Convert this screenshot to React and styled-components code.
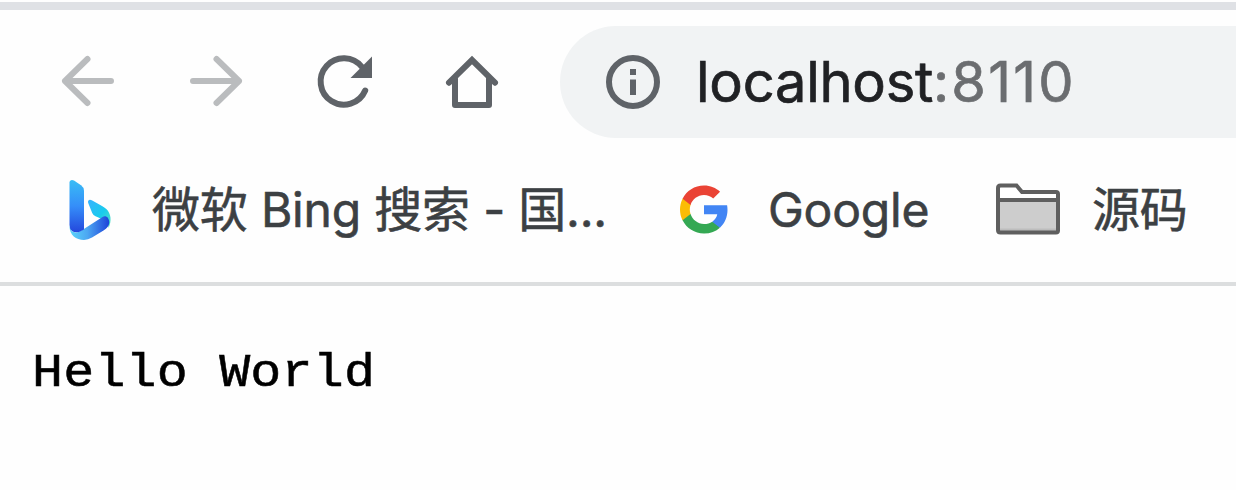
import React from "react";
import styled, { createGlobalStyle } from "styled-components";

const GlobalStyle = createGlobalStyle`
  * { box-sizing: border-box; }
  body { margin: 0; background: #fff; overflow: hidden; }
`;

const Browser = styled.div`
  width: 1236px;
  height: 490px;
  display: flex;
  flex-direction: column;
  overflow: hidden;
  background: #fefefe;
  font-family: Inter, "Noto Sans CJK SC", sans-serif;
`;

const TabStrip = styled.div`
  height: 10px;
  flex: none;
  border-top: 2px solid #fefefe;
  background: #dfe1e5;
`;

const Toolbar = styled.div`
  height: 144px;
  flex: none;
  display: flex;
  align-items: flex-start;
  padding: 16px 0 0 56px;
`;

const NavButtons = styled.div`
  display: flex;
  gap: 64px;
  padding-top: 23px;
  width: 504px;
  flex: none;
`;

const NavIcon = styled.svg`
  display: block;
  width: 64px;
  height: 64px;
  flex: none;
  fill: none;
  stroke: ${(p) => (p.$disabled ? "#babcbe" : "#5f6368")};
  stroke-width: 6;
`;

const AddressBar = styled.div`
  flex: 1;
  height: 112px;
  display: flex;
  align-items: center;
  padding-left: 46px;
  border-radius: 56px 0 0 56px;
  background: #f1f3f4;
`;

const InfoIcon = styled.svg`
  width: 54px;
  height: 54px;
  margin-right: 36px;
  flex: none;
`;

const Host = styled.span`
  font-size: 56px;
  line-height: 64px;
  letter-spacing: ${(p) => p.$spacing}px;
  color: ${(p) => p.$color};
  -webkit-text-stroke: 0.7px ${(p) => p.$color};
`;

const BookmarksBar = styled.div`
  height: 132px;
  flex: none;
  display: flex;
  align-items: flex-start;
  padding: 24px 0 0 64px;
  border-bottom: 4px solid #dcdedf;
`;

const Bookmark = styled.div`
  display: flex;
  align-items: center;
  height: 64px;
  width: ${(p) => p.$width}px;
  flex: none;
`;

const BookmarkIcon = styled.svg`
  width: 64px;
  height: 64px;
  flex: none;
  margin-right: ${(p) => p.$gap}px;
`;

const Label = styled.span`
  font-size: 48px;
  line-height: 64px;
  white-space: pre;
  color: #3c4043;
  letter-spacing: -0.2px;
  -webkit-text-stroke: 0.6px #3c4043;
`;

const Page = styled.main`
  flex: 1;
  padding: 58px 0 0 32px;
`;

const Output = styled.pre`
  margin: 0;
  font: 47px/60px "Liberation Mono", monospace;
  letter-spacing: 0.15px;
  color: #000;
  transform: scaleX(1.1);
  transform-origin: left;
  -webkit-text-stroke: 0.5px #000;
`;

export default function App() {
  return (
    <Browser>
      <GlobalStyle />
      <TabStrip />
      <Toolbar>
        <NavButtons>
          <NavIcon $disabled viewBox="0 0 64 64" strokeLinecap="round" strokeLinejoin="round">
            <path d="M55 32H9M31.500 10L9 32L31.500 54" />
          </NavIcon>
          <NavIcon $disabled viewBox="0 0 64 64" strokeLinecap="round" strokeLinejoin="round">
            <path d="M9 32H55M32.500 10L55 32L32.500 54" />
          </NavIcon>
          <NavIcon viewBox="0 0 64 64" strokeLinecap="round">
            <path d="M50 18A23.200 23.200 0 1 0 53.200 41.500" />
            <path d="M60 7.500V29H38.500Z" fill="#5f6368" stroke="none" />
          </NavIcon>
          <NavIcon viewBox="0 0 64 64" strokeLinecap="round" strokeLinejoin="miter">
            <path d="M9 33.700L32 11L55 33.700" />
            <path d="M15 30V56H49V30" strokeLinejoin="round" />
          </NavIcon>
        </NavButtons>
        <AddressBar>
          <InfoIcon viewBox="0 0 54 54">
            <circle cx="27" cy="27" r="24" fill="none" stroke="#5f6368" strokeWidth="6" />
            <path d="M24 14h6v6h-6zM24 24.500h6V40h-6z" fill="#5f6368" />
          </InfoIcon>
          <Host $color="#202124" $spacing={-0.25}>localhost</Host>
          <Host $color="#6b6d70" $spacing={2.2}>:8110</Host>
        </AddressBar>
      </Toolbar>
      <BookmarksBar>
        <Bookmark $width={608}>
          <BookmarkIcon $gap={24} viewBox="0 0 64 64">
            <defs>
              <linearGradient id="stem" x1="0" y1="0" x2="0" y2="1">
                <stop offset="0" stopColor="#39bdf5" />
                <stop offset=".5" stopColor="#358ef9" />
                <stop offset="1" stopColor="#2447dc" />
              </linearGradient>
              <linearGradient id="base" x1="0" y1="0" x2="1" y2="0">
                <stop offset="0" stopColor="#5bd6fb" />
                <stop offset=".45" stopColor="#4ca7f2" />
                <stop offset="1" stopColor="#1c43d9" />
              </linearGradient>
              <linearGradient id="wing" x1="0" y1="0" x2="1" y2="1">
                <stop offset="0" stopColor="#37b3ff" />
                <stop offset=".55" stopColor="#19cbed" />
                <stop offset="1" stopColor="#5ee3bb" />
              </linearGradient>
            </defs>
            <path d="M27.800 22.300C25.500 20.800 23.300 22.300 24.200 25L28.200 35Q29.300 37.300 31.500 38.300L39 41.500Q44.500 44 44.600 50C47.800 43 47.200 35.500 42.300 31Q40.500 29.500 38 28Z" fill="url(#wing)" />
            <path d="M5.500 48C5.500 57 12 62 20 62Q24 62 28 59.600L39.500 52.500Q45 49 45.300 44.500C45 39 41.500 37.200 38.500 39L17.500 52.500Q12 56 7.500 53Z" fill="url(#base)" />
            <path d="M5.500 4.500C5.500 2 8 1.200 10 2.500L17 7.300Q20 9.400 20 12.800V51.500Q12.500 56.300 8 53Q5.500 51 5.500 47Z" fill="url(#stem)" />
          </BookmarkIcon>
          <Label>微软 Bing 搜索 - 国...</Label>
        </Bookmark>
        <Bookmark $width={324}>
          <BookmarkIcon $gap={32} viewBox="0 0 64 64">
            <g transform="translate(8 7.500)">
              <path fill="#4285f4" d="M47.500 24.550c0-1.600-.15-3.180-.4-4.700H24v8.900h13.250c-.58 2.970-2.270 5.480-4.800 7.180v6h7.730c4.530-4.180 7.320-10.350 7.320-17.380z" />
              <path fill="#34a853" d="M24 48c6.480 0 11.930-2.130 15.890-5.810l-7.730-6c-2.150 1.450-4.920 2.300-8.160 2.300-6.260 0-11.570-4.220-13.470-9.910H2.550v6.190C6.510 42.620 14.620 48 24 48z" />
              <path fill="#fbbc05" d="M10.530 28.590c-.48-1.450-.76-2.990-.76-4.590s.27-3.140.76-4.590v-6.190H2.560C.92 16.460 0 20.120 0 24s.92 7.540 2.560 10.780z" />
              <path fill="#ea4335" d="M24 9.500c3.540 0 6.710 1.220 9.210 3.600l6.850-6.850C35.900 2.380 30.470 0 24 0 14.620 0 6.510 5.380 2.560 13.220l7.980 6.190C12.430 13.720 17.740 9.500 24 9.500z" />
            </g>
          </BookmarkIcon>
          <Label>Google</Label>
        </Bookmark>
        <Bookmark $width={200}>
          <BookmarkIcon $gap={32} viewBox="0 0 64 64">
            <path d="M2 10Q2 7.500 4.500 7.500H20.500L26 14H60Q62 14 62 16V52.500Q62 54.500 60 54.500H4.500Q2 54.500 2 52Z" fill="#fff" />
            <path d="M2 22H62V54H2Z" fill="#cdcdcd" />
            <path d="M2 50.500H62V54H2Z" fill="#bdbdbd" />
            <path d="M2 22H62M2 10Q2 7.500 4.500 7.500H20.500L26 14H60Q62 14 62 16V52.500Q62 54.500 60 54.500H4.500Q2 54.500 2 52Z" fill="none" stroke="#5f5f5f" strokeWidth="4" />
          </BookmarkIcon>
          <Label>源码</Label>
        </Bookmark>
      </BookmarksBar>
      <Page>
        <Output>Hello World</Output>
      </Page>
    </Browser>
  );
}
